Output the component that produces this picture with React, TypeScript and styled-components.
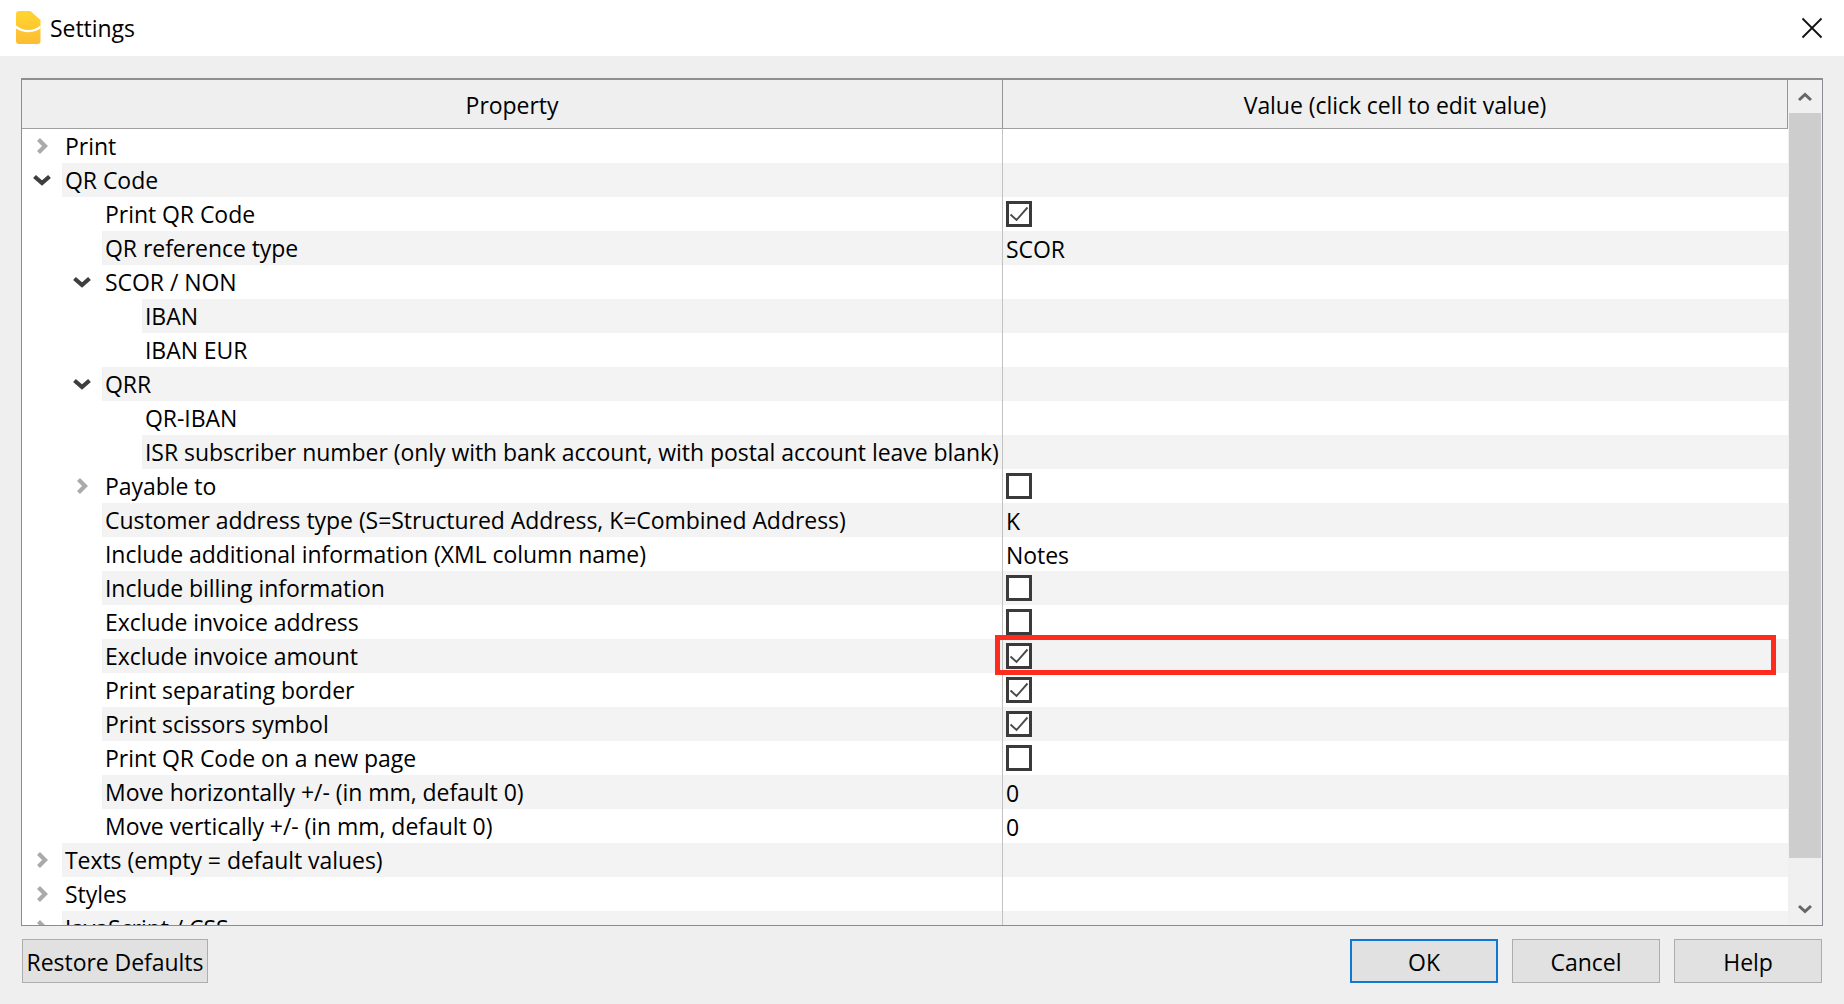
import React from "react";
import styled, { createGlobalStyle } from "styled-components";

const Global = createGlobalStyle`
  html, body { margin: 0; padding: 0; height: 100%; background: #efefef; }
  #root { height: 100%; }
  * { box-sizing: border-box; }
  body { font-family: "Open Sans", "Noto Sans", "Liberation Sans", sans-serif; font-size: 23px; color: #000; letter-spacing: -0.05px; }
`;

const Dialog = styled.div`
  width: 1844px;
  height: 1004px;
  display: flex;
  flex-direction: column;
  overflow: hidden;
  background: #efefef;
`;
const TitleBar = styled.header`
  height: 56px;
  flex: none;
  background: #fff;
  display: flex;
  align-items: center;
  padding: 0 21px 0 16px;
  gap: 9px;
`;
const TitleText = styled.span`
  flex: 1;
  line-height: 56px;
`;
const CloseButton = styled.button`
  border: 0;
  padding: 0;
  background: none;
  width: 22px;
  height: 22px;
  display: flex;
`;
const Content = styled.main`
  flex: 1;
  min-height: 0;
  display: flex;
  flex-direction: column;
  padding: 22px 21px 21px 21px;
  gap: 13px;
`;
const Frame = styled.section`
  position: relative;
  height: 848px;
  flex: none;
  display: flex;
  border: 1px solid #8c8c96;
  border-top: 2px solid #8f8f8f;
  background: #fff;
`;
const TableArea = styled.div`
  width: 1766px;
  flex: none;
  display: flex;
  flex-direction: column;
  min-width: 0;
`;
const HeaderRow = styled.div`
  height: 49px;
  flex: none;
  display: grid;
  grid-template-columns: 981px 1fr;
  background: #efefef;
  border-bottom: 1px solid #a0a0a0;
  border-right: 1px solid #969696;
`;
const HeaderCell = styled.div<{ $divider?: boolean }>`
  display: flex;
  align-items: center;
  justify-content: center;
  padding-top: 1px;
  ${(p) => (p.$divider ? "border-right: 1px solid #969696;" : "")}
`;
const Rows = styled.div`
  flex: 1;
  min-height: 0;
  overflow: hidden;
`;
const RowLine = styled.div`
  height: 34px;
  display: grid;
  grid-template-columns: 981px 1fr;
`;
const PropertyCell = styled.div`
  display: flex;
  min-width: 0;
  border-right: 1px solid #c2c2c2;
`;
const Gutter = styled.div<{ $level: number }>`
  flex: none;
  width: ${(p) => 40 + p.$level * 40}px;
  display: flex;
  align-items: center;
  justify-content: flex-end;
  padding-right: 14px;
`;
const Name = styled.div<{ $striped: boolean }>`
  flex: 1;
  min-width: 0;
  white-space: nowrap;
  padding-left: 3px;
  line-height: 34px;
  background: ${(p) => (p.$striped ? "#f3f3f3" : "#fff")};
`;
const ValueCell = styled.div<{ $striped: boolean }>`
  display: flex;
  align-items: center;
  padding-left: 3px;
  background: ${(p) => (p.$striped ? "#f3f3f3" : "#fff")};
`;
const ValueText = styled.span`
  line-height: 32px;
  padding-top: 2px;
`;
const CheckBox = styled.span`
  width: 26px;
  height: 26px;
  flex: none;
  border: 3px solid #3a3a3a;
  background: #fff;
  display: flex;
  align-items: center;
  justify-content: center;
`;
const Scrollbar = styled.aside`
  flex: 1;
  display: flex;
  flex-direction: column;
  align-items: stretch;
  padding: 0 1px;
  background: #f0f0f0;
`;
const ScrollButton = styled.div<{ $down?: boolean }>`
  height: ${(p) => (p.$down ? "67px" : "33px")};
  flex: none;
  display: flex;
  align-items: ${(p) => (p.$down ? "flex-end" : "center")};
  justify-content: center;
  padding-bottom: ${(p) => (p.$down ? "11px" : "0")};
`;
const Thumb = styled.div`
  height: 745px;
  flex: none;
  background: #cdcdcd;
`;
const Highlight = styled.div`
  position: absolute;
  left: 973px;
  top: 555px;
  width: 781px;
  height: 40px;
  border: 5px solid #fd2c1e;
  pointer-events: none;
`;
const Footer = styled.footer`
  display: flex;
  align-items: center;
  justify-content: space-between;
  padding-right: 1px;
  padding-left: 1px;
`;
const ButtonGroup = styled.div`
  display: flex;
  gap: 14px;
`;
const Button = styled.button<{ $primary?: boolean; $wide?: boolean }>`
  height: 44px;
  width: ${(p) => (p.$wide ? "186px" : "148px")};
  background: #e1e1e1;
  border: ${(p) => (p.$primary ? "2px solid #0f78d4" : "1px solid #adadad")};
  font: inherit;
  letter-spacing: inherit;
  color: #000;
  padding: 2px 0 0;
  white-space: nowrap;
`;

type Row = { label: string; level: number; branch?: "open" | "closed"; value?: string; check?: boolean };

const rows: Row[] = [
  { label: "Print", level: 0, branch: "closed" },
  { label: "QR Code", level: 0, branch: "open" },
  { label: "Print QR Code", level: 1, check: true },
  { label: "QR reference type", level: 1, value: "SCOR" },
  { label: "SCOR / NON", level: 1, branch: "open" },
  { label: "IBAN", level: 2 },
  { label: "IBAN EUR", level: 2 },
  { label: "QRR", level: 1, branch: "open" },
  { label: "QR-IBAN", level: 2 },
  { label: "ISR subscriber number (only with bank account, with postal account leave blank)", level: 2 },
  { label: "Payable to", level: 1, branch: "closed", check: false },
  { label: "Customer address type (S=Structured Address, K=Combined Address)", level: 1, value: "K" },
  { label: "Include additional information (XML column name)", level: 1, value: "Notes" },
  { label: "Include billing information", level: 1, check: false },
  { label: "Exclude invoice address", level: 1, check: false },
  { label: "Exclude invoice amount", level: 1, check: true },
  { label: "Print separating border", level: 1, check: true },
  { label: "Print scissors symbol", level: 1, check: true },
  { label: "Print QR Code on a new page", level: 1, check: false },
  { label: "Move horizontally +/- (in mm, default 0)", level: 1, value: "0" },
  { label: "Move vertically +/- (in mm, default 0)", level: 1, value: "0" },
  { label: "Texts (empty = default values)", level: 0, branch: "closed" },
  { label: "Styles", level: 0, branch: "closed" },
  { label: "JavaScript / CSS", level: 0, branch: "closed" },
];

const Logo = () => (
  <svg width="25" height="33" viewBox="0 0 25 33" style={{ marginTop: -1 }}>
    <defs>
      <linearGradient id="lg" x1="0" y1="0" x2="0" y2="1">
        <stop offset="0" stopColor="#ffd52f" />
        <stop offset="1" stopColor="#fdbc33" />
      </linearGradient>
    </defs>
    <path d="M3 0H14.5L24.5 9V30A3 3 0 0 1 21.5 33H3A3 3 0 0 1 0 30V3A3 3 0 0 1 3 0Z" fill="url(#lg)" />
    <path d="M0 14.5C8 20.5 16.5 20.5 24.5 14.5V17.5C16.5 22.5 8 22.5 0 17.5Z" fill="#fff" />
  </svg>
);

const CloseIcon = () => (
  <svg width="22" height="22" viewBox="0 0 22 22">
    <path d="M1.5 1.5L20.5 20.5M20.5 1.5L1.5 20.5" stroke="#111" strokeWidth="1.8" fill="none" />
  </svg>
);

const ClosedBranch = () => (
  <svg width="12" height="18" viewBox="0 0 12 18">
    <path d="M2.5 2.5L9 9L2.5 15.5" stroke="#aaa" strokeWidth="4.2" fill="none" />
  </svg>
);
const OpenBranch = () => (
  <svg width="18" height="12" viewBox="0 0 18 12" style={{ marginRight: -3 }}>
    <path d="M1.5 2.5L9 9L16.5 2.5" stroke="#3e3e3e" strokeWidth="4.2" fill="none" />
  </svg>
);
const Tick = () => (
  <svg width="20" height="20" viewBox="0 0 20 20">
    <path d="M1.5 10.5L7.5 16L18.5 3.5" stroke="#4a4a4a" strokeWidth="1.9" fill="none" />
  </svg>
);
const ScrollArrow = ({ up }: { up?: boolean }) => (
  <svg width="14" height="10" viewBox="0 0 14 10">
    <path d={up ? "M1 8L7 2.5L13 8" : "M1 2L7 7.5L13 2"} stroke="#666" strokeWidth="3" fill="none" />
  </svg>
);

export default function App() {
  return (
    <Dialog>
      <Global />
      <TitleBar>
        <Logo />
        <TitleText>Settings</TitleText>
        <CloseButton aria-label="Close">
          <CloseIcon />
        </CloseButton>
      </TitleBar>
      <Content>
        <Frame>
          <TableArea>
            <HeaderRow>
              <HeaderCell $divider>Property</HeaderCell>
              <HeaderCell>Value (click cell to edit value)</HeaderCell>
            </HeaderRow>
            <Rows>
              {rows.map((r, i) => {
                const striped = i % 2 === 1;
                return (
                  <RowLine key={r.label}>
                    <PropertyCell>
                      <Gutter $level={r.level}>
                        {r.branch === "closed" && <ClosedBranch />}
                        {r.branch === "open" && <OpenBranch />}
                      </Gutter>
                      <Name $striped={striped}>{r.label}</Name>
                    </PropertyCell>
                    <ValueCell $striped={striped}>
                      {r.check !== undefined && <CheckBox>{r.check && <Tick />}</CheckBox>}
                      {r.value && <ValueText>{r.value}</ValueText>}
                    </ValueCell>
                  </RowLine>
                );
              })}
            </Rows>
          </TableArea>
          <Scrollbar>
            <ScrollButton>
              <ScrollArrow up />
            </ScrollButton>
            <Thumb />
            <ScrollButton $down>
              <ScrollArrow />
            </ScrollButton>
          </Scrollbar>
          <Highlight />
        </Frame>
        <Footer>
          <Button $wide>Restore Defaults</Button>
          <ButtonGroup>
            <Button $primary>OK</Button>
            <Button>Cancel</Button>
            <Button>Help</Button>
          </ButtonGroup>
        </Footer>
      </Content>
    </Dialog>
  );
}
